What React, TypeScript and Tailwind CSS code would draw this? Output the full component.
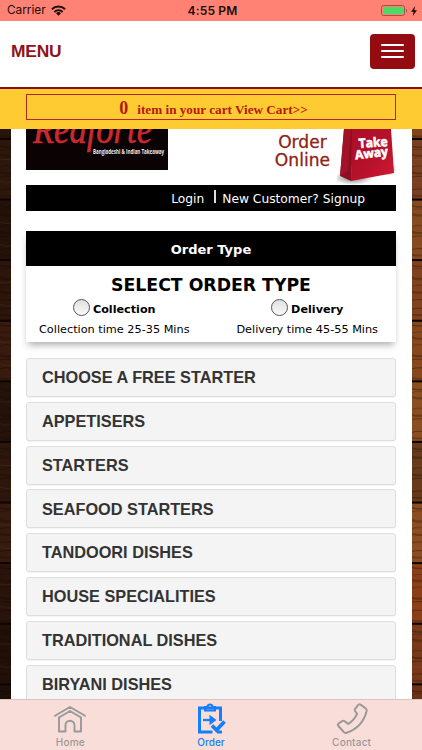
import React, { useState } from "react";

const menuItems = [
  "CHOOSE A FREE STARTER",
  "APPETISERS",
  "STARTERS",
  "SEAFOOD STARTERS",
  "TANDOORI DISHES",
  "HOUSE SPECIALITIES",
  "TRADITIONAL DISHES",
  "BIRYANI DISHES",
];

const orderTypes = [
  { name: "Collection", note: "Collection time 25-35 Mins" },
  { name: "Delivery", note: "Delivery time 45-55 Mins" },
];

// plank colours from top to bottom
const darkPlanks = ["#28150b", "#2c170c", "#24120a", "#2c150b", "#381a0e", "#24130a", "#2d170c", "#351a0e", "#28140a", "#211008", "#1c0f08"];
const lightPlanks = ["#80431c", "#784020", "#854a20", "#80411f", "#87471c", "#8a4e20", "#663a1b", "#8a4c22", "#8a3f18", "#78391a", "#6d3216"];

// grain lines of one plank: offset, height, opacity, tilt
const grain = [
  [4, 1.5, 0.3, 0.8],
  [9, 1, 0.2, -0.6],
  [14, 2.2, 0.25, 1],
  [20, 1, 0.35, 0.4],
  [25, 1.4, 0.18, -1],
  [31, 2, 0.28, 0.7],
  [37, 1, 0.32, -0.5],
  [42, 1.6, 0.22, 1.1],
  [48, 1, 0.34, -0.8],
  [54, 1.8, 0.25, 0.5],
];

function Wood({ planks }: { planks: string[] }) {
  return (
    <svg className="h-[571px] w-[11px]" viewBox="0 0 11 571">
      {planks.map((color, i) => (
        <g key={i} transform={`translate(0 ${-49.6 + i * 60.6})`}>
          <rect width="11" height="61" fill={color} />
          {grain.map(([y, h, opacity, tilt], j) => {
            const top = y + ((i * 7 + j * 3) % 4) - 1.5;
            return (
              <path
                key={j}
                d={`M0 ${top}Q6 ${top + tilt * 2} 11 ${top + tilt}v${h}Q5 ${top + h + tilt * 2} 0 ${top + h}Z`}
                fill={j % 4 === 3 ? "#b9713c" : "#120703"}
                opacity={j % 4 === 3 ? opacity * 0.35 : opacity}
              />
            );
          })}
          <rect y="58.5" width="11" height="2.6" fill="#0c0503" />
        </g>
      ))}
    </svg>
  );
}

function StatusBar() {
  return (
    <div className="grid h-[21px] shrink-0 grid-cols-3 items-center bg-[#ff8274] pr-[4px] pl-[7px] font-['Inter',sans-serif] text-[12px] leading-none text-[#1c0d0b]">
      <div className="flex items-center gap-[5px] pt-px">
        <span className="text-[11.8px]">Carrier</span>
        <svg className="h-[11px] w-[15px]" viewBox="0 0 15 11" fill="none" stroke="currentColor" strokeWidth="2.1">
          <path d="M.9 4.2a9.4 9.4 0 0 1 13.2 0" />
          <path d="M3.4 6.9a5.8 5.8 0 0 1 8.2 0" />
          <path d="M7.5 10.8 5 8.3a3.5 3.5 0 0 1 5 0Z" fill="currentColor" stroke="none" />
        </svg>
      </div>
      <span className="pt-px text-center text-[12px] font-semibold tracking-[0.15px]">4:55 PM</span>
      <div className="flex items-center justify-end gap-[3px]">
        <svg className="h-[11px] w-[27px]" viewBox="0 0 27 11">
          <rect x=".5" y=".5" width="23" height="10" rx="2" fill="none" stroke="#a05048" />
          <rect x="2" y="2" width="20" height="7" rx="1" fill="#4cd964" />
          <path d="M25 3.8c1.5.6 1.5 2.8 0 3.4Z" fill="#a05048" />
        </svg>
        <svg className="mr-px h-[10px] w-[6px]" viewBox="0 0 6 10" fill="currentColor">
          <path d="M4.2 0 0 5.7h2.6L1.7 10 6 4.2H3.3Z" />
        </svg>
      </div>
    </div>
  );
}

function Header() {
  return (
    <header className="flex h-[68px] shrink-0 items-center justify-between border-b-2 border-[#8c1013] bg-white pr-[7px] pl-[11px]">
      <span className="pb-[4px] text-[17.4px] leading-none font-bold tracking-[-0.2px] text-[#921318]">MENU</span>
      <button className="mb-[6px] flex h-[35px] w-[45px] flex-col items-center justify-center gap-1 rounded-[4px] bg-[#940c12]">
        <span className="h-[2px] w-[23px] rounded-full bg-white" />
        <span className="h-[2px] w-[23px] rounded-full bg-white" />
        <span className="h-[2px] w-[23px] rounded-full bg-white" />
      </button>
    </header>
  );
}

function CartBar() {
  return (
    <div className="h-10 shrink-0 bg-[#ffcb32] px-[26px] pt-[5px]">
      <a
        href="#cart"
        className="flex h-[26px] items-baseline justify-center border border-[#b3271b] pl-[5px] font-['Liberation_Serif',serif] font-bold text-[#b5170f]"
      >
        <span className="mr-[9px] text-[18px] leading-[26px]">0</span>
        <span className="text-[13.2px] leading-[16px]">item in your cart View Cart&gt;&gt;</span>
      </a>
    </div>
  );
}

function Banner() {
  return (
    <div className="flex h-14 justify-between">
      <svg className="h-[41px] w-[142px] bg-[#0b0204]" viewBox="0 0 142 41">
        <text
          x="7"
          y="14"
          textLength="119"
          lengthAdjust="spacingAndGlyphs"
          fill="#c92a30"
          stroke="#c92a30"
          strokeWidth="0.6"
          fontSize="40"
          fontStyle="italic"
          fontFamily="Liberation Serif, serif"
        >
          Redforte
        </text>
        <text
          x="67"
          y="25"
          textLength="71"
          lengthAdjust="spacingAndGlyphs"
          fill="#f3eded"
          fontSize="7"
          fontWeight="bold"
          fontFamily="Open Sans, sans-serif"
        >
          Bangladeshi &amp; Indian Takeaway
        </text>
      </svg>
      <div className="flex">
        <div className="pt-[4px] pr-[7px] text-center font-['DejaVu_Sans',sans-serif] text-[17.1px] leading-[18.4px] text-[#8e2317] [-webkit-text-stroke:0.3px_#8e2317]">
          Order
          <br />
          Online
        </div>
        <svg className="h-[56px] w-[59px]" viewBox="0 0 59 56">
          <defs>
            <linearGradient id="bag" x1="0" y1="0" x2="1" y2="1">
              <stop offset="0" stopColor="#a80f26" />
              <stop offset="0.6" stopColor="#b9122c" />
              <stop offset="1" stopColor="#d31a35" />
            </linearGradient>
            <radialGradient id="bagShadow">
              <stop offset="0" stopColor="#333" stopOpacity="0.65" />
              <stop offset="1" stopColor="#333" stopOpacity="0" />
            </radialGradient>
          </defs>
          <ellipse cx="16" cy="49" rx="20" ry="7" fill="url(#bagShadow)" />
          <ellipse cx="50" cy="40" rx="10" ry="7" fill="url(#bagShadow)" />
          <path d="M7 0 3 47l11 5 3-52Z" fill="#8d0d20" />
          <path d="M7 0h7l-3 42-8 5Z" fill="#a11127" />
          <path d="M15 0h39l3 44-43 8Z" fill="url(#bag)" />
          <g fill="#fff" fontFamily="Open Sans, sans-serif" fontWeight="bold" stroke="#fff" strokeWidth="0.6">
            <text x="22" y="19" fontSize="13" textLength="29" lengthAdjust="spacingAndGlyphs" transform="rotate(-4 22 19)">
              Take
            </text>
            <text x="18.5" y="30.5" fontSize="12.5" textLength="33" lengthAdjust="spacingAndGlyphs" transform="rotate(-7 19 30)">
              Away
            </text>
          </g>
        </svg>
      </div>
    </div>
  );
}

function OrderType() {
  const [selected, setSelected] = useState("");

  return (
    <section className="mt-5 h-[111px] bg-white font-['DejaVu_Sans',sans-serif] text-black shadow-[0_5px_7px_-2px_rgba(0,0,0,0.32)]">
      <h2 className="h-[35px] bg-black text-center text-[13px] leading-[37px] font-bold text-white">Order Type</h2>
      <h3 className="pt-[8px] text-center text-[17.3px] leading-[22px] font-bold">SELECT ORDER TYPE</h3>
      <div className="flex justify-between pr-[18px] pl-[13px]">
        {orderTypes.map(type => (
          <div key={type.name} className="flex flex-col items-center">
            <label className="flex h-[25px] items-center">
              <input
                type="radio"
                name="order"
                checked={selected === type.name}
                onChange={() => setSelected(type.name)}
                className="mr-[3px] -mt-[2px] size-[17px] appearance-none rounded-full border border-[#555] bg-linear-to-b from-[#e0e0e0] to-[#fafafa] checked:bg-black"
              />
              <span className="pt-[3px] text-[11.2px] leading-[14px] font-bold">{type.name}</span>
            </label>
            <span className="pt-[2px] text-[11.27px] leading-[14px]">{type.note}</span>
          </div>
        ))}
      </div>
    </section>
  );
}

function TabBar() {
  return (
    <nav className="grid h-[51px] shrink-0 grid-cols-3 border-t border-[#dcc3c0] bg-[#f9ddd9] font-['Inter',sans-serif] text-[10px] leading-none font-medium text-[#999]">
      <a href="#home" className="flex flex-col items-center">
        <svg className="mt-[5px] h-[29px] w-[34px]" viewBox="0 0 34 29" fill="none" stroke="currentColor" strokeWidth="1.9" strokeLinejoin="round" strokeLinecap="round">
          <path d="M2 10.8 17 2l15 8.8M6 12.5 17 6l11 6.5" />
          <path d="M6 12.5v14h6.5v-6.3a4.5 4.5 0 0 1 9 0v6.3H28v-14" />
        </svg>
        <span className="mt-[3px] tracking-[0.2px]">Home</span>
      </a>
      <a href="#order" className="flex flex-col items-center text-[#147efb]">
        <svg className="mt-[2px] h-[32px] w-[30px]" viewBox="0 0 30 32" fill="none" stroke="currentColor" strokeWidth="3">
          <path d="M24.5 19V6H3.5v24h13M21 30h5" />
          <path d="M9 8.5h10V5h-2.5a2.5 2.5 0 0 0-5 0H9Z" strokeWidth="2" />
          <path d="M7 18h9" strokeWidth="2.3" />
          <path d="M13.5 12.8 20.5 18l-7 5.2Z" fill="currentColor" stroke="none" />
          <path d="m16 23.5 4.5 4.5 8-8.5" strokeWidth="3.7" />
        </svg>
        <span className="mt-[3px]">Order</span>
      </a>
      <a href="#contact" className="flex flex-col items-center">
        <svg className="mt-[3px] h-[31px] w-[32px]" viewBox="0 0 32 31" fill="none" stroke="currentColor" strokeWidth="2" strokeLinejoin="round">
          <path d="M22.5 1.6c1-.5 1.6-.3 2.5.3l4.7 3.6c.9.7 1.1 1.5.9 2.5C28 18.5 20.5 26.5 10.5 29.8c-1.2.4-2 .1-2.7-.8l-5.4-6c-.7-.9-.6-1.8.2-2.5l3.6-2.3c.9-.6 1.7-.5 2.5.1l3.4 2.7c4.2-2.7 7.2-6 9-10.2l-2-2.8c-.6-.9-.5-1.7.2-2.4Z" />
        </svg>
        <span className="mt-[3px] tracking-[0.2px]">Contact</span>
      </a>
    </nav>
  );
}

export default function App() {
  return (
    <div className="flex h-[750px] w-[422px] flex-col overflow-hidden bg-white font-['Liberation_Sans',sans-serif]">
      <StatusBar />
      <Header />
      <CartBar />

      <div className="flex h-0 grow overflow-hidden">
        <div className="w-[11px] shrink-0 overflow-hidden">
          <Wood planks={darkPlanks} />
        </div>

        <main className="w-[401px] shrink-0 bg-white pr-[16px] pl-[15px]">
          <Banner />
          <div className="flex h-[26px] items-center bg-black pr-[31px] font-['DejaVu_Sans',sans-serif] text-[12.25px] text-white">
            <a href="#login" className="ml-auto pt-[2px]">Login</a>
            <span className="mr-[6px] mb-[3px] ml-[10px] h-[13px] w-[2px] bg-[#ddd]" />
            <a href="#signup" className="pt-[2px]">New Customer? Signup</a>
          </div>
          <OrderType />

          <ul className="mt-[16px] flex flex-col gap-[4.8px]">
            {menuItems.map(item => (
              <li
                key={item}
                className="flex h-[39px] shrink-0 items-center rounded-[3px] border border-[#dedede] bg-[#f4f4f4] pl-[15px] text-[16.3px] font-bold text-[#333] shadow-[0_1px_1px_rgba(0,0,0,0.05)]"
              >
                {item}
              </li>
            ))}
          </ul>
        </main>

        <div className="w-[10px] shrink-0 overflow-hidden">
          <Wood planks={lightPlanks} />
        </div>
      </div>

      <TabBar />
    </div>
  );
}
